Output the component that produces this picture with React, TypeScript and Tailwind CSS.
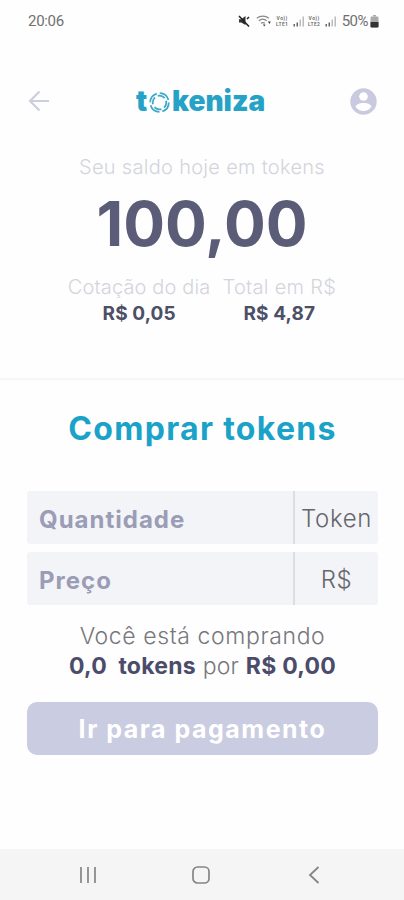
import { useState } from 'react';
import type { ReactNode } from 'react';

interface StatProps {
  label: string;
  value: string;
  labelClassName: string;
}

interface FieldProps {
  id: string;
  label: string;
  unit: string;
  value: string;
  onChange: (value: string) => void;
}

function MuteIcon() {
  return (
    <svg width="12" height="12" viewBox="0 0 12 12" fill="none">
      <path d="M1 4.2h2.2L7.500 1v9L3.200 7.500H1z" fill="#333" />
      <path d="M1 1l10 10.500M9 4l2-2" stroke="#222" strokeWidth="1.500" />
    </svg>
  );
}

function WifiIcon() {
  return (
    <svg width="15" height="12" viewBox="0 0 15 12" fill="none">
      <path d="M.8 3.200C4.200.500 9.500.500 12.800 3.200M2.800 5.800c2.400-2 5.600-2 8 0M4.900 8.300c1.300-1 2.700-1 4 0" stroke="#888" strokeWidth="1.200" />
      <path d="M7 9.500h2.500L8.200 11.500zM12 6.500h2.800L13.400 9z" fill="#333" />
    </svg>
  );
}

function SignalIcon() {
  return (
    <svg width="12" height="12" viewBox="0 0 12 12">
      <path d="M.5 9h1.500v2.500H.5zM3.500 7.500H5v4H3.500z" fill="#666" />
      <path d="M6.500 4.500H8v7H6.500zM9.500 1.500H11v10H9.500z" fill="#bbb" />
    </svg>
  );
}

function LteLabel({ sim }: { sim: number }) {
  return (
    <span className="flex w-[15px] flex-col items-center text-[5px] leading-[6px] font-semibold tracking-[0.4px] text-[#666]">
      <span>Vo))</span>
      <span>LTE{sim}</span>
    </span>
  );
}

function StatusBar() {
  return (
    <div className="flex h-[42px] items-center pl-7 pr-[25px] font-['Roboto',sans-serif] text-[#707070]">
      <span className="text-[15px] tracking-[-0.3px]">20:06</span>
      <div className="ml-auto flex items-center">
        <MuteIcon />
        <span className="ml-[6px]"><WifiIcon /></span>
        <span className="ml-[4px]"><LteLabel sim={1} /></span>
        <span className="ml-[3px]"><SignalIcon /></span>
        <span className="ml-[2px]"><LteLabel sim={2} /></span>
        <span className="ml-[3px]"><SignalIcon /></span>
        <span className="ml-[5px] text-[15px] tracking-[-0.5px]">50%</span>
        <svg className="ml-[2px]" width="9" height="13" viewBox="0 0 9 13">
          <path d="M3 0h3v1.500H3z" fill="#aaa" />
          <rect x=".5" y="1.500" width="8" height="11" rx="1.200" fill="#aaa" />
          <path d="M.5 7h8v4.300q0 1.200-1.200 1.200H1.700Q.5 12.500.5 11.300z" fill="#333" />
        </svg>
      </div>
    </div>
  );
}

function Logo() {
  return (
    <div className="flex h-8 items-center text-[28px] leading-8 font-black text-[#25a2c6]">
      <span>t</span>
      <svg className="mr-[2px] ml-[2px] mt-[2px]" width="21" height="21" viewBox="0 0 21 21" fill="none" stroke="#3ba9c9">
        <circle cx="10.500" cy="10.500" r="9.300" strokeWidth="1.800" strokeDasharray="11.600 3" />
        <circle cx="10.500" cy="10.500" r="6.800" strokeWidth="1.800" strokeDasharray="7.600 3.080" strokeDashoffset="2" />
      </svg>
      <span>keniza</span>
    </div>
  );
}

function Header() {
  return (
    <header className="flex h-[118px] items-center justify-between px-[27px]">
      <button type="button" aria-label="Voltar">
        <svg width="24" height="24" viewBox="0 0 24 24" fill="none" stroke="#cdcde0" strokeWidth="2.200">
          <path d="M22 12H3M12.500 2.500L3 12l9.500 9.500" />
        </svg>
      </button>
      <Logo />
      <button type="button" aria-label="Perfil">
        <svg width="27" height="27" viewBox="0 0 27 27">
          <circle cx="13.500" cy="13.500" r="13.200" fill="#c9cae0" />
          <circle cx="13.500" cy="8.500" r="4.300" fill="#fff" />
          <path d="M5.500 18.800c1-5.200 15-5.200 16 0-3.700 5.600-12.300 5.600-16 0z" fill="#fff" />
        </svg>
      </button>
    </header>
  );
}

function Stat({ label, value, labelClassName }: StatProps) {
  return (
    <div className="flex flex-col items-center">
      <span className={`text-[20px] leading-[27px] font-light whitespace-nowrap text-[#d3d4dc] ${labelClassName}`}>{label}</span>
      <span className="text-[19px] leading-[26px] font-bold tracking-[0.1px] text-[#4d4f66]">{value}</span>
    </div>
  );
}

function Field({ id, label, unit, value, onChange }: FieldProps) {
  return (
    <div className="flex h-[53px] overflow-hidden rounded-[3px] bg-[#f3f4f8]">
      <input
        id={id}
        type="text"
        value={value}
        onChange={(e) => onChange(e.target.value)}
        placeholder={label}
        className="h-full w-[266px] pt-[3px] pl-[12px] text-[24px] font-bold tracking-[1px] text-[#4d4f66] placeholder:text-[#9b9cb5] placeholder:opacity-100 focus:outline-none"
      />
      <div className="flex flex-1 items-center justify-center border-l-2 border-[#dddee5] pt-[3px] text-[24px] font-light tracking-[0.6px] text-[#66666c]">
        {unit}
      </div>
    </div>
  );
}

function Strong({ children }: { children: ReactNode }) {
  return <strong className="font-bold text-[#4a4c6a]">{children}</strong>;
}

function NavigationBar() {
  return (
    <nav className="flex h-[51px] items-center justify-between bg-[#f5f5f5] pr-[84px] pl-[79px]">
      <svg width="18" height="18" viewBox="0 0 18 18" stroke="#858585" strokeWidth="1.700">
        <path d="M2 1v16M9 1v16M16 1v16" />
      </svg>
      <svg className="-ml-[3px]" width="20" height="20" viewBox="0 0 20 20" fill="none" stroke="#858585" strokeWidth="1.700">
        <rect x="2" y="2" width="16" height="16" rx="4.500" />
      </svg>
      <svg width="12" height="18" viewBox="0 0 12 18" fill="none" stroke="#858585" strokeWidth="1.800">
        <path d="M10.500 1L2 9l8.500 8" />
      </svg>
    </nav>
  );
}

export default function App() {
  const [quantity, setQuantity] = useState('');
  const [price, setPrice] = useState('');

  return (
    <div className="flex h-[900px] w-[404px] flex-col overflow-hidden bg-[#fefefe] font-['Inter',sans-serif]">
      <StatusBar />
      <Header />

      <section className="-mt-[7px] flex h-[227px] flex-col items-center border-b-2 border-[#f6f6f7]">
        <p className="text-[20px] leading-[28px] font-light tracking-[0.3px] text-[#d3d4dc]">Seu saldo hoje em tokens</p>
        <p className="mt-[13px] text-[62px] leading-[60px] font-bold text-[#5b5d78]">100,00</p>
        <div className="mt-5 flex gap-3">
          <Stat label="Cotação do dia" value="R$ 0,05" labelClassName="tracking-[0.15px]" />
          <Stat label="Total em R$" value="R$ 4,87" labelClassName="tracking-[0.3px]" />
        </div>
      </section>

      <main className="flex flex-1 flex-col pr-[26px] pl-[27px]">
        <h1 className="mt-[29px] text-center text-[32px] leading-[40px] font-bold tracking-[1.3px] text-[#1ba2c8]">Comprar tokens</h1>
        <div className="mt-[42px] flex flex-col gap-2">
          <Field id="quantity" label="Quantidade" unit="Token" value={quantity} onChange={setQuantity} />
          <Field id="price" label="Preço" unit="R$" value={price} onChange={setPrice} />
        </div>
        <div className="mt-4 text-center text-[23px] leading-[30px] font-light whitespace-pre text-[#77777d]">
          <p className="tracking-[0.6px]">Você está comprando</p>
          <p className="tracking-[0.25px]">
            <Strong>0,0  tokens</Strong> por <Strong>R$ 0,00</Strong>
          </p>
        </div>
        <button type="button" className="mt-[21px] h-[53px] rounded-[10px] bg-[#cacce1] pt-[3px] text-[25px] font-bold tracking-[1.5px] text-white">
          Ir para pagamento
        </button>
      </main>

      <NavigationBar />
    </div>
  );
}
